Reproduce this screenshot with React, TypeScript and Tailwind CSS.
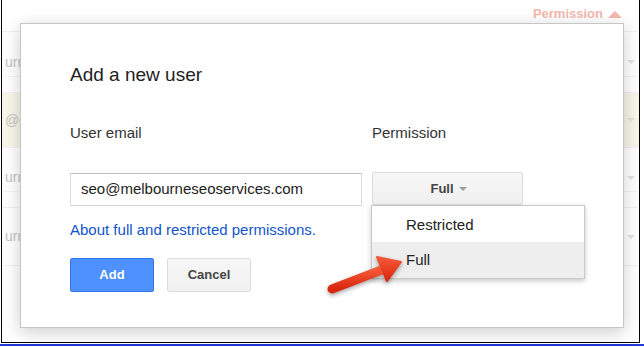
import React from 'react';

const font = { fontFamily: '"Liberation Sans", Arial, sans-serif' };

function BgRow({ label, yellow, height, line }: { label: string; yellow?: boolean; height: string; line?: boolean }) {
  return (
    <div className={`${height} ${yellow ? 'bg-[#f8f5e9]' : 'bg-white'} border-b border-[#f0f0f0] flex items-center justify-between pl-[3px] pr-[4px] relative`}>
      <span className="text-[14px] text-[#c4c4c4]">{label}</span>
      <span className="w-0 h-0 border-l-[4px] border-r-[4px] border-t-[4px] border-l-transparent border-r-transparent border-t-[#e2e2e2]" />
      {line && <div className="absolute left-0 right-0 bottom-[15px] border-b border-[#f4f4f4]" />}
    </div>
  );
}

function Arrow() {
  return (
    <svg
      className="absolute left-[320px] top-[245px] z-20 drop-shadow-[0_2px_2px_rgba(0,0,0,0.35)]"
      width="100"
      height="60"
      viewBox="0 0 100 60"
    >
      <defs>
        <linearGradient id="ar" x1="0" y1="0" x2="0" y2="1">
          <stop offset="0" stopColor="#f45a38" />
          <stop offset="1" stopColor="#d9260e" />
        </linearGradient>
      </defs>
      <line x1="12" y1="44" x2="64" y2="24" stroke="url(#ar)" strokeWidth="9" strokeLinecap="round" />
      <polygon points="81,17 57,12 67,36" fill="url(#ar)" stroke="url(#ar)" strokeWidth="2" strokeLinejoin="round" />
    </svg>
  );
}

export default function App() {
  return (
    <div className="w-[644px] h-[347px] bg-white relative overflow-hidden" style={font}>
      <div className="w-[639px] h-[343px] ml-[1px] border-l border-r border-b border-black flex flex-col overflow-hidden">
        <div className="h-[32px] shrink-0 border-b border-[#f0f0f0] flex items-center justify-end pr-[17px] gap-[5px] pb-[3px]">
          <span className="text-[13px] font-bold text-[#f3b8ae]">Permission</span>
          <span className="w-0 h-0 border-l-[7px] border-r-[7px] border-b-[7px] border-l-transparent border-r-transparent border-b-[#f3b8ae]" />
        </div>
        <BgRow label="urne" height="h-[61px]" line />
        <BgRow label="@gmail" height="h-[55px]" yellow />
        <BgRow label="urne" height="h-[60px]" line />
        <BgRow label="urne" height="h-[58px]" />
      </div>
      <div className="h-[2px] mt-[1px] bg-[#2337d8]" />

      {/* dialog */}
      <div className="absolute left-[20px] top-[23px] w-[604px] h-[305px] bg-white border border-[#c6c6c6] shadow-[0_4px_16px_rgba(0,0,0,0.2)] pt-[40px] pl-[49px]">
        <h1 className="text-[19px] leading-[22px] text-[#222]">Add a new user</h1>

        <div className="flex gap-[10px] mt-[38px]">
          <div className="w-[292px] flex flex-col">
            <div className="text-[15px] leading-[18px] text-[#333]">User email</div>
            <div className="mt-[31px] h-[33px] border border-[#d9d9d9] border-t-[#c0c0c0] flex items-center pl-[10px] text-[15px] text-[#222]">
              seo@melbourneseoservices.com
            </div>
          </div>
          <div className="flex flex-col">
            <div className="text-[15px] leading-[18px] text-[#333]">Permission</div>
            <div className="relative mt-[30px]">
              <div className="w-[151px] h-[33px] rounded-[2px] border border-[#dcdcdc] bg-gradient-to-b from-[#f6f6f6] to-[#f0f0f0] flex items-center justify-center gap-[5px] pl-[2px]">
                <span className="text-[13px] font-bold text-[#444]">Full</span>
                <span className="w-0 h-0 border-l-[4px] border-r-[4px] border-t-[4px] border-l-transparent border-r-transparent border-t-[#a0a0a0]" />
              </div>
              <div className="absolute left-[-1px] top-[33px] w-[214px] bg-white border border-[#c8c8c8] shadow-[0_2px_5px_rgba(0,0,0,0.22)] z-10">
                <div className="h-[36px] flex items-center pl-[34px] pt-[3px] text-[15px] text-[#222]">Restricted</div>
                <div className="h-[36px] flex items-center pl-[34px] text-[15px] text-[#222] bg-[#eeeeee]">Full</div>
              </div>
            </div>
          </div>
        </div>

        <a className="block mt-[15px] text-[15px] leading-[18px] text-[#1155cc] w-fit">
          About full and restricted permissions.
        </a>

        <div className="flex gap-[13px] mt-[19px]">
          <button className="w-[84px] h-[34px] rounded-[2px] bg-[#4d90fe] border border-[#3079ed] text-white text-[13px] font-bold">
            Add
          </button>
          <button className="w-[84px] h-[34px] rounded-[2px] bg-gradient-to-b from-[#f6f6f6] to-[#f1f1f1] border border-[#dcdcdc] text-[#444] text-[13px] font-bold">
            Cancel
          </button>
        </div>
      </div>

      <Arrow />
    </div>
  );
}
